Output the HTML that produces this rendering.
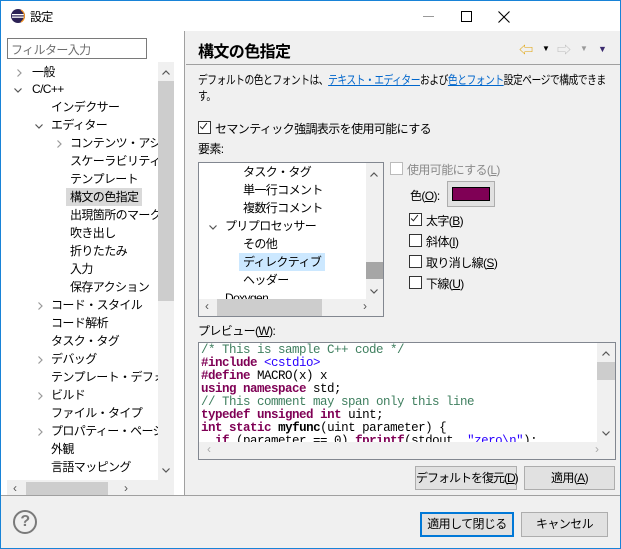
<!DOCTYPE html>
<html><head><meta charset="utf-8"><style>
*{box-sizing:border-box;margin:0;padding:0}
body{width:621px;height:549px;overflow:hidden;background:#f0f0f0;font-family:"Liberation Sans","Noto Sans CJK JP",sans-serif;font-size:12px;color:#000;position:relative;letter-spacing:-0.6px}
.abs{position:absolute;white-space:nowrap}
.win{position:absolute;left:0;top:0;width:621px;height:549px;border:1px solid #1883d7}
.title{position:absolute;left:1px;top:1px;width:619px;height:30px;background:#fff}
.left{position:absolute;left:1px;top:31px;width:184px;height:464px;background:#fff;border-right:1px solid #a0a0a0;overflow:hidden}
.row{position:absolute;height:18px;line-height:18px;font-size:12px;white-space:nowrap}
.cr,.cd{position:absolute;width:8px;height:8px}
.cb{position:absolute;width:13px;height:13px;border:1px solid #333;background:#fff}
.btn{position:absolute;background:#e1e1e1;border:1px solid #adadad;text-align:center;font-size:12px;white-space:nowrap}
.mono{font-family:"Liberation Mono","Noto Sans CJK JP",monospace}
.k{color:#7f0055;font-weight:bold}
.c{color:#3f7f5f}
.s{color:#2a00ff}
</style></head><body>
<svg width="0" height="0" style="position:absolute"><defs>
<symbol id="r" viewBox="0 0 8 8"><path d="M2.5 0.5L6 4L2.5 7.5" stroke="#999" stroke-width="1.2" fill="none"/></symbol>
<symbol id="d" viewBox="0 0 8 8"><path d="M0.5 2.5L4 6L7.5 2.5" stroke="#555" stroke-width="1.2" fill="none"/></symbol>
<symbol id="cm" viewBox="0 0 13 13"><path d="M2.5 6.5L5.2 9.2L10.5 2.5" stroke="#222" stroke-width="1.2" fill="none"/></symbol>
</defs></svg>
<div class="title">
 <svg class="abs" style="left:9px;top:7px" width="16" height="16" viewBox="0 0 16 16"><circle cx="8" cy="8" r="7" fill="#2c2255"/><rect x="2" y="6" width="12" height="1.3" fill="#fff"/><rect x="2" y="8.5" width="12" height="1.3" fill="#fff"/><path d="M11 2 A7 7 0 0 1 11 14" stroke="#f7941e" stroke-width="1.2" fill="none"/></svg>
 <div class="abs" style="left:29px;top:7px;font-size:12px">設定</div>
 <div class="abs" style="left:422px;top:15px;width:11px;height:1px;background:#999"></div>
 <div class="abs" style="left:460px;top:10px;width:11px;height:11px;border:1px solid #000"></div>
 <svg class="abs" style="left:497px;top:10px" width="12" height="12"><path d="M0.5 0.5L11.5 11.5M11.5 0.5L0.5 11.5" stroke="#000" stroke-width="1.1"/></svg>
</div>
<div class="left">
 <div class="abs" style="left:6px;top:7px;width:140px;height:21px;border:1px solid #7a7a7a;color:#6d6d6d;padding:2px 3px;font-size:12px">フィルター入力</div>
 <div class="row" style="left:31px;top:32px">一般</div>
 <div class="row" style="left:31px;top:49px">C/C++</div>
 <div class="row" style="left:50px;top:67px">インデクサー</div>
 <div class="row" style="left:50px;top:85px">エディター</div>
 <div class="row" style="left:69px;top:103px">コンテンツ・アシスト</div>
 <div class="row" style="left:69px;top:121px">スケーラビリティ</div>
 <div class="row" style="left:69px;top:139px">テンプレート</div>
 <div class="row" style="left:65px;top:157px;background:#d9d9d9;padding:0 4px">構文の色指定</div>
 <div class="row" style="left:69px;top:175px">出現箇所のマーク</div>
 <div class="row" style="left:69px;top:193px">吹き出し</div>
 <div class="row" style="left:69px;top:211px">折りたたみ</div>
 <div class="row" style="left:69px;top:229px">入力</div>
 <div class="row" style="left:69px;top:247px">保存アクション</div>
 <div class="row" style="left:50px;top:265px">コード・スタイル</div>
 <div class="row" style="left:50px;top:283px">コード解析</div>
 <div class="row" style="left:50px;top:301px">タスク・タグ</div>
 <div class="row" style="left:50px;top:319px">デバッグ</div>
 <div class="row" style="left:50px;top:337px">テンプレート・デフォルト値</div>
 <div class="row" style="left:50px;top:355px">ビルド</div>
 <div class="row" style="left:50px;top:373px">ファイル・タイプ</div>
 <div class="row" style="left:50px;top:391px">プロパティー・ページ設定</div>
 <div class="row" style="left:50px;top:409px">外観</div>
 <div class="row" style="left:50px;top:427px">言語マッピング</div>
 <svg class="cr" style="left:14px;top:38px"><use href="#r"/></svg>
 <svg class="cd" style="left:13px;top:55px"><use href="#d"/></svg>
 <svg class="cd" style="left:34px;top:91px"><use href="#d"/></svg>
 <svg class="cr" style="left:54px;top:109px"><use href="#r"/></svg>
 <svg class="cr" style="left:35px;top:271px"><use href="#r"/></svg>
 <svg class="cr" style="left:35px;top:325px"><use href="#r"/></svg>
 <svg class="cr" style="left:35px;top:361px"><use href="#r"/></svg>
 <svg class="cr" style="left:35px;top:397px"><use href="#r"/></svg>
 <div class="abs" style="left:157px;top:31px;width:27px;height:418px;background:#fff"></div>
 <div class="abs" style="left:157px;top:31px;width:16px;height:418px;background:#f0f0f0"></div>
 <div class="abs" style="left:157px;top:50px;width:16px;height:220px;background:#cdcdcd"></div>
 <svg class="cd" style="left:161px;top:38px;transform:rotate(180deg)"><use href="#d"/></svg>
 <svg class="cd" style="left:161px;top:435px"><use href="#d"/></svg>
 <div class="abs" style="left:6px;top:449px;width:167px;height:16px;background:#f0f0f0"></div>
 <div class="abs" style="left:25px;top:451px;width:82px;height:13px;background:#cdcdcd"></div>
 <div class="abs" style="left:12px;top:450px;color:#555">‹</div>
 <div class="abs" style="left:123px;top:450px;color:#555">›</div>
</div>
<!-- right -->
<div class="abs" style="left:186px;top:64px;width:434px;height:1px;background:#a0a0a0"></div>
<div class="abs" style="left:198px;top:38px;font-size:16px;font-weight:bold">構文の色指定</div>
<div class="abs" style="left:519px;top:40px;color:#e0a000;font-size:14px">⇦</div>
<div class="abs" style="left:542px;top:44px;font-size:8px">▼</div>
<div class="abs" style="left:557px;top:40px;color:#bbb;font-size:14px">⇨</div>
<div class="abs" style="left:580px;top:44px;font-size:8px;color:#999">▼</div>
<div class="abs" style="left:598px;top:44px;font-size:9px;color:#3b2a6e">▼</div>
<div class="abs" style="left:198px;top:72px;font-size:12px;line-height:16px;letter-spacing:-0.6px;transform:scaleX(0.815);transform-origin:0 0">デフォルトの色とフォントは、<span style="color:#0066cc;text-decoration:underline">テキスト・エディター</span>および<span style="color:#0066cc;text-decoration:underline">色とフォント</span>設定ページで構成できま<br>す。</div>
<div class="cb" style="left:198px;top:121px"><svg width="11" height="11" viewBox="1 1 11 11" style="display:block"><use href="#cm"/></svg></div>
<div class="abs" style="left:215px;top:120px">セマンティック強調表示を使用可能にする</div>
<div class="abs" style="left:198px;top:140px">要素:</div>
<div class="abs" style="left:198px;top:162px;width:186px;height:155px;border:1px solid #828790;background:#fff;overflow:hidden">
 <div class="row" style="left:44px;top:0px">タスク・タグ</div>
 <div class="row" style="left:44px;top:18px">単一行コメント</div>
 <div class="row" style="left:44px;top:36px">複数行コメント</div>
 <svg class="cd" style="left:10px;top:60px"><use href="#d"/></svg><div class="row" style="left:26px;top:54px">プリプロセッサー</div>
 <div class="row" style="left:44px;top:72px">その他</div>
 <div class="row" style="left:40px;top:90px;background:#cce8ff;padding:0 4px">ディレクティブ</div>
 <div class="row" style="left:44px;top:108px">ヘッダー</div>
 <div class="row" style="left:26px;top:126px;height:10px;overflow:hidden;line-height:18px">Doxygen</div>
 <div class="abs" style="left:167px;top:0;width:17px;height:136px;background:#f0f0f0"></div>
 <div class="abs" style="left:167px;top:99px;width:17px;height:17px;background:#a6a6a6"></div>
 <svg class="cd" style="left:171px;top:8px;transform:rotate(180deg)"><use href="#d"/></svg>
 <svg class="cd" style="left:171px;top:124px"><use href="#d"/></svg>
 <div class="abs" style="left:0;top:136px;width:184px;height:17px;background:#f0f0f0"></div>
 <div class="abs" style="left:18px;top:136px;width:105px;height:17px;background:#cdcdcd"></div>
 <div class="abs" style="left:6px;top:136px;color:#555">‹</div>
 <div class="abs" style="left:164px;top:136px;color:#555">›</div>
</div>
<div class="cb" style="left:390px;top:162px;border-color:#bbb"></div>
<div class="abs" style="left:407px;top:161px;color:#8a8a8a">使用可能にする(<u>L</u>)</div>
<div class="abs" style="left:410px;top:187px">色(<u>O</u>):</div>
<div class="abs" style="left:447px;top:181px;width:48px;height:26px;border:1px solid #adadad;background:#e1e1e1"><div style="margin:5px 4px;width:38px;height:14px;background:#7f0055;border:1px solid #000"></div></div>
<div class="cb" style="left:409px;top:213px"><svg width="11" height="11" viewBox="1 1 11 11" style="display:block"><use href="#cm"/></svg></div><div class="abs" style="left:426px;top:212px">太字(<u>B</u>)</div>
<div class="cb" style="left:409px;top:234px"></div><div class="abs" style="left:426px;top:233px">斜体(<u>I</u>)</div>
<div class="cb" style="left:409px;top:255px"></div><div class="abs" style="left:426px;top:254px">取り消し線(<u>S</u>)</div>
<div class="cb" style="left:409px;top:276px"></div><div class="abs" style="left:426px;top:275px">下線(<u>U</u>)</div>
<div class="abs" style="left:198px;top:322px">プレビュー(<u>W</u>):</div>
<div class="abs" style="left:198px;top:342px;width:418px;height:118px;border:1px solid #828790;background:#fff;overflow:hidden">
 <pre class="mono" style="position:absolute;left:2px;top:1px;font-size:12.5px;line-height:13px;letter-spacing:-0.5px;white-space:pre"><span class="c">/* This is sample C++ code */</span>
<span class="k">#include</span> <span class="s">&lt;cstdio&gt;</span>
<span class="k">#define</span> MACRO(x) x
<span class="k">using</span> <span class="k">namespace</span> std;
<span class="c">// This comment may span only this line</span>
<span class="k">typedef</span> <span class="k">unsigned</span> <span class="k">int</span> uint;
<span class="k">int</span> <span class="k">static</span> <b>myfunc</b>(uint parameter) {
  <span class="k">if</span> (parameter == 0) <span class="k">fprintf</span>(stdout, <span class="s">"zero\n"</span>);</pre>
 <div class="abs" style="left:398px;top:0;width:18px;height:99px;background:#f0f0f0"></div>
 <div class="abs" style="left:398px;top:19px;width:18px;height:18px;background:#cdcdcd"></div>
 <svg class="cd" style="left:403px;top:7px;transform:rotate(180deg)"><use href="#d"/></svg>
 <svg class="cd" style="left:403px;top:86px"><use href="#d"/></svg>
 <div class="abs" style="left:0;top:99px;width:416px;height:17px;background:#f0f0f0"></div>
 <div class="abs" style="left:8px;top:99px;color:#aaa">‹</div>
 <div class="abs" style="left:396px;top:99px;color:#aaa">›</div>
</div>
<div class="btn" style="left:415px;top:466px;width:102px;height:24px;line-height:22px;letter-spacing:-1px">デフォルトを復元(<u>D</u>)</div>
<div class="btn" style="left:524px;top:466px;width:91px;height:24px;line-height:22px">適用(<u>A</u>)</div>
<div class="abs" style="left:1px;top:495px;width:619px;height:1px;background:#a0a0a0"></div>
<div class="abs" style="left:13px;top:510px;width:24px;height:24px;border:2px solid #7a7a7a;border-radius:50%;text-align:center;line-height:20px;font-size:16px;font-weight:bold;color:#7a7a7a">?</div>
<div class="btn" style="left:420px;top:512px;width:94px;height:25px;line-height:21px;border:2px solid #0078d7">適用して閉じる</div>
<div class="btn" style="left:521px;top:512px;width:87px;height:25px;line-height:23px">キャンセル</div>
<div class="win"></div>
</body></html>
